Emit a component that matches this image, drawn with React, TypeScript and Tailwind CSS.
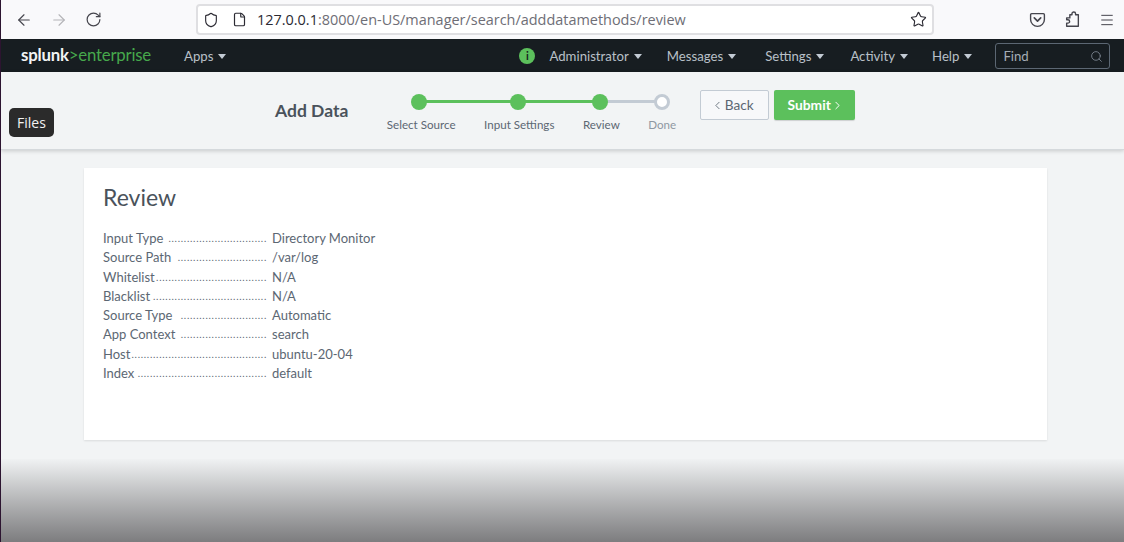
import { ArrowLeft, ArrowRight, RotateCw, Shield, File, Star, Menu, Search, ChevronLeft, ChevronRight } from "lucide-react";

const rows = [
  ["Input Type", "Directory Monitor", 32],
  ["Source Path", "/var/log", 29],
  ["Whitelist", "N/A", 36],
  ["Blacklist", "N/A", 37],
  ["Source Type", "Automatic", 28],
  ["App Context", "search", 28],
  ["Host", "ubuntu-20-04", 44],
  ["Index", "default", 42],
] as const;

const Caret = () => (
  <span className="ml-[5px] inline-block h-0 w-0 border-x-[4px] border-t-[5px] border-x-transparent border-t-[#c3cbd4] align-[2px]" />
);

function NavItem({ label, className }: { label: string; className: string }) {
  return (
    <span className={`mt-[2px] whitespace-nowrap text-[13.2px] text-[#b9c0c8] ${className}`}>
      {label}
      <Caret />
    </span>
  );
}

const steps = [
  { label: "Select Source", state: "done", line: "w-[97px] bg-[#5cc05c]", dot: "mr-[4px]" },
  { label: "Input Settings", state: "done", line: "w-[81px] bg-[#5cc05c]", dot: "mr-[2px]" },
  { label: "Review", state: "done", line: "w-[61px] bg-[#c3cbd4]", dot: "mr-[2px]" },
  { label: "Done", state: "todo", line: "", dot: "" },
];

export default function App() {
  return (
    <div className="relative flex h-[542px] w-[1124px] flex-col overflow-hidden border-l border-l-[#2c1430] bg-[#f2f4f5] font-['Lato',sans-serif] text-[#3c444d]">
      <div className="flex h-[39px] shrink-0 items-center bg-[#f9f9fb] font-['Open_Sans',sans-serif]">
        <div className="flex items-center gap-[17px] pl-[14px] text-[#45454d]">
          <ArrowLeft size={18} strokeWidth={1.5} />
          <ArrowRight size={18} strokeWidth={1.5} className="text-[#b4b4b8]" />
          <RotateCw size={17} strokeWidth={1.7} />
        </div>
        <div className="ml-[94px] flex h-[31px] w-[738px] items-center rounded-[4px] border-2 border-[#dfdfe2] bg-white pl-[5px] pr-[5px] text-[#2b2a33]">
          <Shield size={16} strokeWidth={1.7} />
          <File size={15} strokeWidth={1.9} className="ml-[13px]" />
          <span className="ml-[10px] whitespace-nowrap text-[14.45px]">
            127.0.0.1<span className="text-[#6e6e76]">:8000/en-US/manager/search/adddatamethods/review</span>
          </span>
          <Star size={17} strokeWidth={1.6} className="ml-auto" />
        </div>
        <div className="ml-[95px] flex items-center gap-[18px] text-[#45454d]">
          <svg width="17" height="17" viewBox="0 0 16 16" fill="none" stroke="currentColor" strokeWidth="1.3">
            <path d="M2.5 2.5h11a1 1 0 0 1 1 1v4.5a6.5 6.5 0 0 1-13 0V3.5a1 1 0 0 1 1-1z" />
            <path d="M5 6.5l3 3 3-3" strokeLinecap="round" strokeLinejoin="round" strokeWidth="1.6" />
          </svg>
          <svg width="17" height="17" viewBox="0 0 16 16" fill="none" stroke="currentColor" strokeWidth="1.3" strokeLinejoin="round">
            <path d="M6.5 3.5h2V2.6a1.7 1.7 0 0 1 3.4 0v.9h2.6v10.9H3.5v-3h1.2a1.6 1.6 0 0 0 0-3.2H3.5V6.5h3z" transform="translate(-1 0)" />
          </svg>
          <Menu size={16} strokeWidth={1.5} />
        </div>
      </div>

      <div className="flex h-[33px] shrink-0 items-center bg-[#171d21]">
        <span className="ml-[20px] whitespace-nowrap text-[16.8px] leading-none tracking-[-0.2px]">
          <span className="font-bold text-[#f2f4f5]">splunk</span>
          <span className="text-[#46a84c]">&gt;enterprise</span>
        </span>
        <NavItem label="Apps" className="ml-[33px]" />
        <span className="ml-[293px] flex h-[16px] w-[16px] items-center justify-center rounded-full bg-[#5cc05c] text-[11px] font-bold leading-none text-[#171d21]">i</span>
        <NavItem label="Administrator" className="ml-[14px]" />
        <NavItem label="Messages" className="ml-[25px]" />
        <NavItem label="Settings" className="ml-[29px]" />
        <NavItem label="Activity" className="ml-[26px]" />
        <NavItem label="Help" className="ml-[24px]" />
        <div className="ml-[23px] mt-[1px] flex h-[26px] w-[115px] items-center justify-between rounded-[3px] border border-[#5c6773] pl-[7px] pr-[6px] pt-[1px] text-[13.2px] text-[#a5adb6]">
          Find
          <Search size={13} strokeWidth={1.6} className="text-[#7d8792]" />
        </div>
      </div>

      <div className="relative flex h-[78px] shrink-0 items-start border-b border-[#d5d9dc] bg-[#f2f4f5] pl-[274px] shadow-[0_1px_4px_rgba(0,0,0,0.18)]">
        <h1 className="mt-[28px] whitespace-nowrap text-[17.5px] font-bold leading-[22px] text-[#4a525b]">Add Data</h1>
        <div className="ml-[38.5px] mt-[22px] flex gap-[28.5px]">
          {steps.map((s) => (
            <div key={s.label} className="relative flex flex-col items-center">
              {s.line && <span className={`absolute left-1/2 top-[6px] h-[3px] ${s.line}`} />}
              {s.state === "done" ? (
                <span className={`relative h-[16px] w-[16px] rounded-full bg-[#5cc05c] ${s.dot}`} />
              ) : (
                <span className="relative h-[16px] w-[16px] rounded-full border-[3px] border-[#c3cbd4] bg-white" />
              )}
              <span className={`mt-[8px] whitespace-nowrap text-[11.6px] leading-[14px] ${s.state === "done" ? "text-[#5c6773]" : "text-[#8f98a2]"}`}>{s.label}</span>
            </div>
          ))}
        </div>
        <button className="ml-[24px] mt-[18px] flex h-[30px] w-[69px] items-center justify-center gap-[1px] rounded-[2px] border border-[#c3cbd4] bg-[#f7f8fa] pr-[5px] pt-[1px] text-[13.6px] text-[#5c6773]">
          <ChevronLeft size={13} strokeWidth={1.6} />
          Back
        </button>
        <button className="ml-[5px] mt-[18px] flex h-[30px] w-[81px] items-center justify-center gap-[0px] rounded-[2px] bg-[#5cc05c] pl-[2px] pt-[1px] text-[13.8px] font-bold text-white shadow-[0_1px_1px_rgba(0,0,0,0.15)]">
          Submit
          <ChevronRight size={13} strokeWidth={1.8} />
        </button>
      </div>

      <div className="ml-[83px] mt-[18px] h-[272px] w-[963px] bg-white pl-[19px] pt-[15px] shadow-[0_1px_2px_rgba(0,0,0,0.1)]">
        <h2 className="text-[23px] font-normal leading-[28px] text-[#4a525b]">Review</h2>
        <dl className="mt-[18px] w-[290px] text-[13px] leading-[19.25px] text-[#5c6773]">
          {rows.map(([k, v, n]) => (
            <div key={k} className="flex">
              <dt className="flex w-[164px] shrink-0 justify-between whitespace-nowrap">
                <span>{k}</span>
                <span className="text-[10px] tracking-[0.72px]">{".".repeat(n)}</span>
              </dt>
              <dd className="ml-[5px] whitespace-nowrap">{v}</dd>
            </div>
          ))}
        </dl>
      </div>

      <div className="mt-auto h-[83px] shrink-0 bg-gradient-to-b from-[#f0f2f3] to-[#7d7d7f]" />

      <div className="absolute left-[8px] top-[108px] flex h-[29px] w-[45px] items-center justify-center rounded-[5px] bg-[#2b2b2b] font-['Open_Sans',sans-serif] text-[14px] text-[#f2f2f2]">
        Files
      </div>
    </div>
  );
}
